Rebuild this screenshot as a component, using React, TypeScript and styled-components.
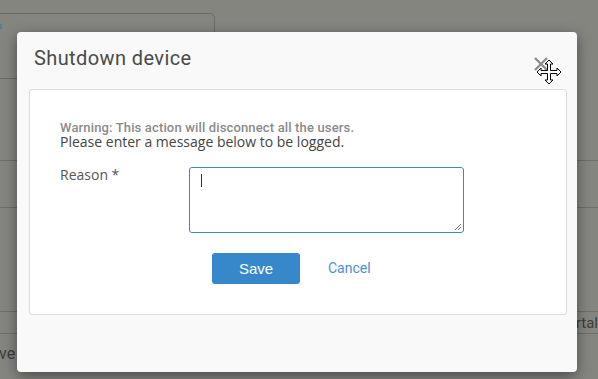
import React from "react";
import styled, { createGlobalStyle } from "styled-components";

const Global = createGlobalStyle`
  html, body { margin: 0; padding: 0; }
  body {
    width: 598px;
    height: 379px;
    overflow: hidden;
    font-family: Roboto, "Liberation Sans", Arial, sans-serif;
    background: #858580;
  }
`;

const Page = styled.div`
  position: relative;
  width: 598px;
  height: 379px;
  overflow: hidden;
  background: #858580;
`;

const BgCard = styled.div`
  margin-top: 13px;
  width: 214px;
  height: 64px;
  border: 1px solid #6a6a65;
  border-left: none;
  border-radius: 0 5px 0 0;
  border-bottom: 1px solid #6a6a65;
  position: relative;
`;

const BgDot = styled.span`
  position: absolute;
  left: 0;
  top: 10px;
  width: 2px;
  height: 5px;
  background: #4f7f9c;
`;

const BgLine = styled.div<{ $gap: number }>`
  margin-top: ${(p) => p.$gap}px;
  height: 1px;
  background: #6e6e69;
`;

const BgRow = styled.div`
  display: flex;
  justify-content: space-between;
  align-items: center;
  height: 21px;
  font-size: 15px;
  color: #3e3e3b;
`;

const BgText = styled.div`
  margin-top: 10px;
  font-size: 16px;
  color: #3e3e3b;
  margin-left: -1px;
`;

const Modal = styled.div`
  position: absolute;
  left: 17px;
  top: 32px;
  width: 560px;
  height: 340px;
  background: #f9f9f9;
  border-radius: 4px;
  box-shadow: 0 4px 14px rgba(0, 0, 0, 0.45);
  display: flex;
  flex-direction: column;
  box-sizing: border-box;
  padding: 0 10px 0 12px;
`;

const Header = styled.div`
  height: 57px;
  display: flex;
  align-items: center;
  justify-content: space-between;
  padding: 0 0 0 5px;
  box-sizing: border-box;
`;

const Title = styled.h2`
  margin: 0;
  margin-top: -6px;
  font-size: 20px;
  font-weight: 400;
  color: #4a4a4a;
  letter-spacing: 0.4px;
`;

const CloseBtn = styled.div`
  width: 16px;
  height: 16px;
  margin-right: 18px;
  margin-top: 6px;
  display: flex;
  align-items: center;
  justify-content: center;
`;

const Panel = styled.div`
  background: #fff;
  border: 1px solid #dcdcdc;
  border-radius: 3px;
  height: 226px;
  box-sizing: border-box;
  padding: 31px 0 0 30px;
  display: flex;
  flex-direction: column;
`;

const Warning = styled.div`
  font-size: 13px;
  line-height: 14px;
  font-weight: 500;
  color: #8a8a8a;
  letter-spacing: 0.15px;
`;

const Info = styled.div`
  font-family: "Open Sans", Roboto, sans-serif;
  font-size: 14px;
  line-height: 14px;
  color: #444;
`;

const FormRow = styled.div`
  display: flex;
  margin-top: 18px;
`;

const Label = styled.label`
  width: 129px;
  font-family: "Open Sans", Roboto, sans-serif;
  font-size: 14px;
  line-height: 16px;
  color: #555;
`;

const Area = styled.div`
  position: relative;
  width: 275px;
  height: 66px;
  box-sizing: border-box;
  border: 1px solid #3c87c8;
  border-radius: 3px;
  background: #fff;
`;

const Caret = styled.span`
  position: absolute;
  left: 11px;
  top: 6px;
  width: 1px;
  height: 13px;
  background: #333;
`;

const Grip = styled.svg`
  position: absolute;
  right: 1px;
  bottom: 1px;
`;

const Actions = styled.div`
  display: flex;
  align-items: center;
  margin-top: 20px;
  padding-left: 152px;
  gap: 28px;
`;

const SaveBtn = styled.button`
  width: 88px;
  height: 31px;
  border: none;
  border-radius: 3px;
  background: #3787cb;
  color: #fff;
  font-family: "Liberation Sans", Arial, sans-serif;
  font-size: 15px;
  font-weight: 400;
  padding: 0;
`;

const CancelLink = styled.a`
  font-size: 14px;
  color: #4a8fd6;
  text-decoration: none;
  margin-top: -1px;
`;

const Cursor = styled.svg`
  position: absolute;
  left: 536px;
  top: 59px;
`;

export default function App() {
  return (
    <Page>
      <Global />
      <BgCard>
        <BgDot />
      </BgCard>
      <BgLine $gap={81} />
      <BgLine $gap={46} />
      <BgLine $gap={103} />
      <BgRow>
        <span />
        <span>rtal</span>
      </BgRow>
      <BgLine $gap={0} />
      <BgText>ve p</BgText>

      <Modal>
        <Header>
          <Title>Shutdown device</Title>
          <CloseBtn>
            <svg width="14" height="14" viewBox="0 0 14 14">
              <path d="M1 1 L13 13 M13 1 L1 13" stroke="#8a8a8a" strokeWidth="2.2" />
            </svg>
          </CloseBtn>
        </Header>
        <Panel>
          <Warning>Warning: This action will disconnect all the users.</Warning>
          <Info>Please enter a message below to be logged.</Info>
          <FormRow>
            <Label>Reason *</Label>
            <Area>
              <Caret />
              <Grip width="8" height="8" viewBox="0 0 8 8">
                <path d="M7 1 L1 7 M7 4 L4 7" stroke="#777" strokeWidth="1" />
              </Grip>
            </Area>
          </FormRow>
          <Actions>
            <SaveBtn>Save</SaveBtn>
            <CancelLink href="#">Cancel</CancelLink>
          </Actions>
        </Panel>
      </Modal>

      <Cursor width="26" height="26" viewBox="0 0 26 26">
        <path
          d="M13 1 L17 5 L14.5 5 L14.5 11.5 L21 11.5 L21 9 L25 13 L21 17 L21 14.5 L14.5 14.5 L14.5 21 L17 21 L13 25 L9 21 L11.5 21 L11.5 14.5 L5 14.5 L5 17 L1 13 L5 9 L5 11.5 L11.5 11.5 L11.5 5 L9 5 Z"
          fill="#fff"
          stroke="#000"
          strokeWidth="1"
          strokeLinejoin="miter"
        />
      </Cursor>
    </Page>
  );
}
